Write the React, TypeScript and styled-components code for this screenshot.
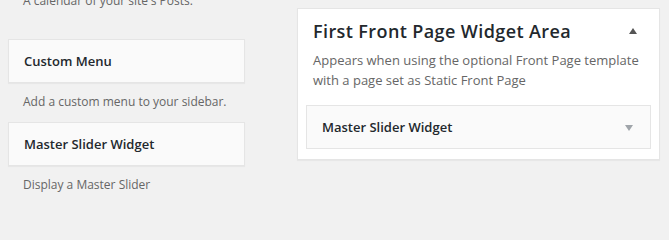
import styled, { createGlobalStyle } from "styled-components"

const GlobalStyle = createGlobalStyle`
  html, body {
    margin: 0;
    padding: 0;
    background: #f1f1f1;
    overflow: hidden;
  }
  body {
    font-family: "Open Sans", "Liberation Sans", sans-serif;
    font-size: 13px;
    color: #444;
  }
`;

const available = [
    { title: "Custom Menu", desc: "Add a custom menu to your sidebar." },
    { title: "Master Slider Widget", desc: "Display a Master Slider" },
]

const App = () => {
    return (
        <>
        <GlobalStyle />
        <Page>
            <WidgetList>
                <Desc $spaced>A calendar of your site's Posts.</Desc>
                {available.map((w) => (
                    <div key={w.title}>
                        <Card>
                            <CardTitle>{w.title}</CardTitle>
                        </Card>
                        <Desc>{w.desc}</Desc>
                    </div>
                ))}
            </WidgetList>

            <Sidebar>
                <SidebarHead>
                    <SidebarTitle>First Front Page Widget Area</SidebarTitle>
                    <Arrow $dir="up" />
                </SidebarHead>
                <SidebarDesc>
                    Appears when using the optional Front Page template with a page set as Static Front Page
                </SidebarDesc>
                <InnerCard>
                    <CardTitle>Master Slider Widget</CardTitle>
                    <Arrow $dir="down" />
                </InnerCard>
            </Sidebar>
        </Page>
        </>
    )
}

export default App

const Page = styled.div`
display: flex;
align-items: flex-start;
gap: 52px;
padding: 8px 0 0 8px;
`;
const WidgetList = styled.div`
width: 237px;
margin-top: -17px;
display: flex;
flex-direction: column;
`;
const Desc = styled.div<{ $spaced?: boolean }>`
padding: ${(p) => (p.$spaced ? "0 15px 28px" : "9px 15px 10px")};
font-size: 12px;
line-height: 20px;
color: #666;
white-space: nowrap;
`;
const Card = styled.div`
height: 44px;
box-sizing: border-box;
background: #fafafa;
border: 1px solid #e5e5e5;
box-shadow: 0 1px 1px rgba(0, 0, 0, 0.04);
padding: 0 15px;
display: flex;
align-items: center;
`;
const CardTitle = styled.span`
font-size: 13px;
font-weight: 600;
line-height: 42px;
color: #23282d;
`;
const Sidebar = styled.div`
width: 363px;
box-sizing: border-box;
background: #fff;
border: 1px solid #e5e5e5;
box-shadow: 0 1px 1px rgba(0, 0, 0, 0.04);
padding-bottom: 10px;
`;
const SidebarHead = styled.div`
display: flex;
justify-content: space-between;
align-items: center;
padding: 10px 22px 0 15px;
`;
const SidebarTitle = styled.h2`
margin: 0;
font-size: 18px;
font-weight: 600;
letter-spacing: 0.4px;
line-height: 24px;
color: #23282d;
`;
const SidebarDesc = styled.div`
margin-top: 8px;
padding: 0 15px;
line-height: 19.5px;
color: #666;
`;
const InnerCard = styled(Card)`
margin: 15px 8px 0;
justify-content: space-between;
padding: 0 17px 0 15px;
box-shadow: none;
`;
const Arrow = styled.span<{ $dir: "up" | "down" }>`
width: 0;
height: 0;
border-left: 4.5px solid transparent;
border-right: 4.5px solid transparent;
${(p) =>
    p.$dir === "up"
        ? "border-bottom: 6px solid #555;"
        : "border-top: 6px solid #a0a5aa; margin-top: 2px;"}
`;
